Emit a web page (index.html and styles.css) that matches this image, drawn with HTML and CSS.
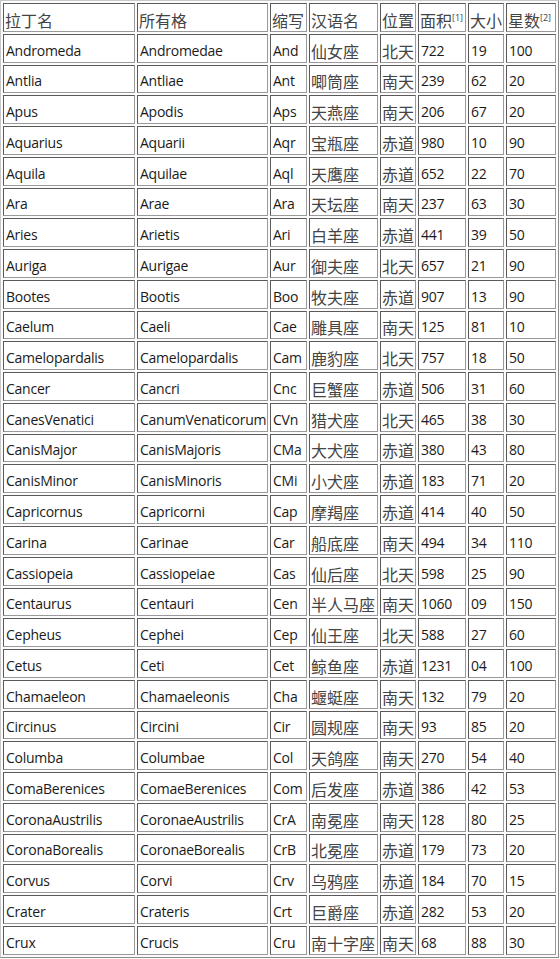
FILE: index.html
```html
<!DOCTYPE html>
<html lang="zh">
<head>
<meta charset="utf-8">
<link rel="stylesheet" href="styles.css">
</head>
<body>
<table class="stars">
<colgroup>
<col class="c1"><col class="c2"><col class="c3"><col class="c4"><col class="c5"><col class="c6"><col class="c7"><col class="c8">
</colgroup>
<tbody>
<tr class="head"><td class="zh">拉丁名</td><td class="zh">所有格</td><td class="zh">缩写</td><td class="zh">汉语名</td><td class="zh">位置</td><td class="zh">面积<sup>[1]</sup></td><td class="zh">大小</td><td class="zh">星数<sup>[2]</sup></td></tr>
<tr><td>Andromeda</td><td>Andromedae</td><td>And</td><td class="zh">仙女座</td><td class="zh">北天</td><td>722</td><td>19</td><td>100</td></tr>
<tr><td>Antlia</td><td>Antliae</td><td>Ant</td><td class="zh">唧筒座</td><td class="zh">南天</td><td>239</td><td>62</td><td>20</td></tr>
<tr><td>Apus</td><td>Apodis</td><td>Aps</td><td class="zh">天燕座</td><td class="zh">南天</td><td>206</td><td>67</td><td>20</td></tr>
<tr><td>Aquarius</td><td>Aquarii</td><td>Aqr</td><td class="zh">宝瓶座</td><td class="zh">赤道</td><td>980</td><td>10</td><td>90</td></tr>
<tr><td>Aquila</td><td>Aquilae</td><td>Aql</td><td class="zh">天鹰座</td><td class="zh">赤道</td><td>652</td><td>22</td><td>70</td></tr>
<tr><td>Ara</td><td>Arae</td><td>Ara</td><td class="zh">天坛座</td><td class="zh">南天</td><td>237</td><td>63</td><td>30</td></tr>
<tr><td>Aries</td><td>Arietis</td><td>Ari</td><td class="zh">白羊座</td><td class="zh">赤道</td><td>441</td><td>39</td><td>50</td></tr>
<tr><td>Auriga</td><td>Aurigae</td><td>Aur</td><td class="zh">御夫座</td><td class="zh">北天</td><td>657</td><td>21</td><td>90</td></tr>
<tr><td>Bootes</td><td>Bootis</td><td>Boo</td><td class="zh">牧夫座</td><td class="zh">赤道</td><td>907</td><td>13</td><td>90</td></tr>
<tr><td>Caelum</td><td>Caeli</td><td>Cae</td><td class="zh">雕具座</td><td class="zh">南天</td><td>125</td><td>81</td><td>10</td></tr>
<tr><td>Camelopardalis</td><td>Camelopardalis</td><td>Cam</td><td class="zh">鹿豹座</td><td class="zh">北天</td><td>757</td><td>18</td><td>50</td></tr>
<tr><td>Cancer</td><td>Cancri</td><td>Cnc</td><td class="zh">巨蟹座</td><td class="zh">赤道</td><td>506</td><td>31</td><td>60</td></tr>
<tr><td>CanesVenatici</td><td>CanumVenaticorum</td><td>CVn</td><td class="zh">猎犬座</td><td class="zh">北天</td><td>465</td><td>38</td><td>30</td></tr>
<tr><td>CanisMajor</td><td>CanisMajoris</td><td>CMa</td><td class="zh">大犬座</td><td class="zh">赤道</td><td>380</td><td>43</td><td>80</td></tr>
<tr><td>CanisMinor</td><td>CanisMinoris</td><td>CMi</td><td class="zh">小犬座</td><td class="zh">赤道</td><td>183</td><td>71</td><td>20</td></tr>
<tr><td>Capricornus</td><td>Capricorni</td><td>Cap</td><td class="zh">摩羯座</td><td class="zh">赤道</td><td>414</td><td>40</td><td>50</td></tr>
<tr><td>Carina</td><td>Carinae</td><td>Car</td><td class="zh">船底座</td><td class="zh">南天</td><td>494</td><td>34</td><td>110</td></tr>
<tr><td>Cassiopeia</td><td>Cassiopeiae</td><td>Cas</td><td class="zh">仙后座</td><td class="zh">北天</td><td>598</td><td>25</td><td>90</td></tr>
<tr><td>Centaurus</td><td>Centauri</td><td>Cen</td><td class="zh">半人马座</td><td class="zh">南天</td><td>1060</td><td>09</td><td>150</td></tr>
<tr><td>Cepheus</td><td>Cephei</td><td>Cep</td><td class="zh">仙王座</td><td class="zh">北天</td><td>588</td><td>27</td><td>60</td></tr>
<tr><td>Cetus</td><td>Ceti</td><td>Cet</td><td class="zh">鲸鱼座</td><td class="zh">赤道</td><td>1231</td><td>04</td><td>100</td></tr>
<tr><td>Chamaeleon</td><td>Chamaeleonis</td><td>Cha</td><td class="zh">蝘蜓座</td><td class="zh">南天</td><td>132</td><td>79</td><td>20</td></tr>
<tr><td>Circinus</td><td>Circini</td><td>Cir</td><td class="zh">圆规座</td><td class="zh">南天</td><td>93</td><td>85</td><td>20</td></tr>
<tr><td>Columba</td><td>Columbae</td><td>Col</td><td class="zh">天鸽座</td><td class="zh">南天</td><td>270</td><td>54</td><td>40</td></tr>
<tr><td>ComaBerenices</td><td>ComaeBerenices</td><td>Com</td><td class="zh">后发座</td><td class="zh">赤道</td><td>386</td><td>42</td><td>53</td></tr>
<tr><td>CoronaAustrilis</td><td>CoronaeAustrilis</td><td>CrA</td><td class="zh">南冕座</td><td class="zh">南天</td><td>128</td><td>80</td><td>25</td></tr>
<tr><td>CoronaBorealis</td><td>CoronaeBorealis</td><td>CrB</td><td class="zh">北冕座</td><td class="zh">赤道</td><td>179</td><td>73</td><td>20</td></tr>
<tr><td>Corvus</td><td>Corvi</td><td>Crv</td><td class="zh">乌鸦座</td><td class="zh">赤道</td><td>184</td><td>70</td><td>15</td></tr>
<tr><td>Crater</td><td>Crateris</td><td>Crt</td><td class="zh">巨爵座</td><td class="zh">赤道</td><td>282</td><td>53</td><td>20</td></tr>
<tr><td>Crux</td><td>Crucis</td><td>Cru</td><td class="zh">南十字座</td><td class="zh">南天</td><td>68</td><td>88</td><td>30</td></tr>
</tbody>
</table>
</body>
</html>
```
FILE: styles.css
```css
html, body {
  margin: 0;
  padding: 0;
  background: #fdfbfb;
}
.stars {
  table-layout: fixed;
  border-collapse: separate;
  border-spacing: 2px;
  border: 1px solid #8a8a8a;
  border-top-color: #c8c8c8;
  border-left-color: #c8c8c8;
  width: 559px;
  font-family: "Open Sans", "Noto Sans", sans-serif;
  font-size: 14px;
  letter-spacing: -0.25px;
  color: #1a1a1a;
}
.c1 { width: 132px; }
.c2 { width: 131px; }
.c3 { width: 37px; }
.c4 { width: 69px; }
.c5 { width: 36px; }
.c6 { width: 48px; }
.c7 { width: 36px; }
.c8 { width: 50px; }
.stars td {
  box-sizing: border-box;
  height: 28.77px;
  padding: 0 0 2px 2px;
  border: 1px solid #9a9a9a;
  border-top-color: #5a5a5a;
  border-left-color: #5a5a5a;
  background: #ffffff;
  vertical-align: bottom;
  white-space: nowrap;
  overflow: visible;
  line-height: 18px;
}
.stars td.zh {
  font-family: "Noto Sans CJK SC", sans-serif;
  font-size: 16px;
  letter-spacing: 0;
  color: #444;
  padding-left: 1px;
}
.stars sup {
  font-family: "Open Sans", sans-serif;
  font-size: 9px;
  line-height: 0;
  vertical-align: 6px;
}
```
